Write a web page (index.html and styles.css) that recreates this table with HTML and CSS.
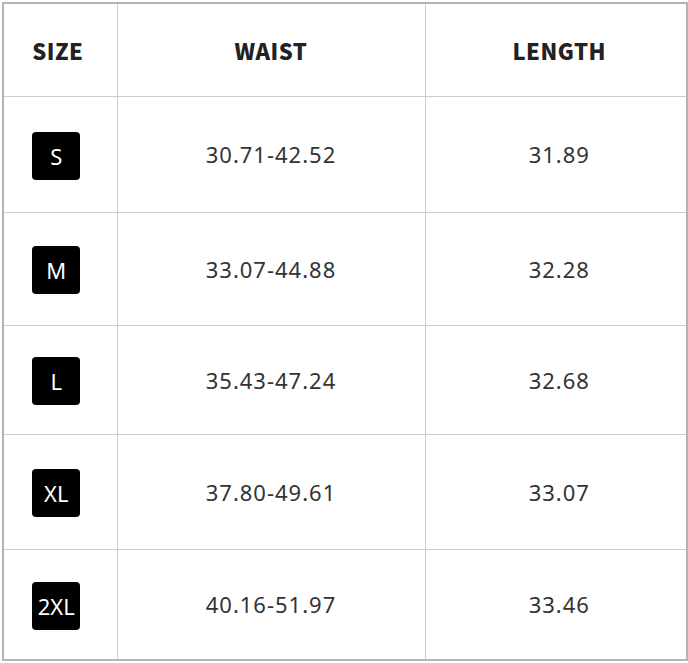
FILE: index.html
```html
<!DOCTYPE html>
<html>
<head>
<meta charset="utf-8">
<link rel="stylesheet" href="styles.css">
</head>
<body>
<div class="wrap">
<table class="chart">
  <colgroup>
    <col class="c1"><col class="c2"><col class="c3">
  </colgroup>
  <thead>
    <tr class="r0"><th class="k1">SIZE</th><th>WAIST</th><th class="k3">LENGTH</th></tr>
  </thead>
  <tbody>
    <tr class="r1"><td class="k1"><span class="badge">S</span></td><td>30.71-42.52</td><td class="k3">31.89</td></tr>
    <tr class="r2"><td class="k1"><span class="badge">M</span></td><td>33.07-44.88</td><td class="k3">32.28</td></tr>
    <tr class="r3"><td class="k1"><span class="badge">L</span></td><td>35.43-47.24</td><td class="k3">32.68</td></tr>
    <tr class="r4"><td class="k1"><span class="badge">XL</span></td><td>37.80-49.61</td><td class="k3">33.07</td></tr>
    <tr class="r5"><td class="k1"><span class="badge">2XL</span></td><td>40.16-51.97</td><td class="k3">33.46</td></tr>
  </tbody>
</table>
</div>
</body>
</html>
```
FILE: styles.css
```css
html, body {
  margin: 0;
  padding: 0;
  background: #fff;
}
.wrap {
  padding: 2px 2px 2px 2px;
}
.chart {
  border-collapse: collapse;
  width: 684px;
  table-layout: fixed;
  border: 2px solid #b4b4b4;
  font-family: "Noto Sans", "Noto Sans CJK SC", sans-serif;
}
.c1 { width: 114px; }
.c2 { width: 308px; }
.c3 { width: 262px; }
.chart th, .chart td {
  border: 1px solid #cdcdcd;
  text-align: center;
  vertical-align: middle;
  padding: 0;
}
.chart th {
  font-family: "Noto Sans CJK SC", "Noto Sans", sans-serif;
  font-size: 22px;
  font-weight: 900;
  color: #222;
  letter-spacing: 0.5px;
}
.chart td {
  font-size: 22px;
  letter-spacing: 1px;
  color: #333;
}
.chart .k1 { padding-right: 5px; }
.chart .k3 { padding-left: 7px; }
.r0 { height: 93px; }
.r1 { height: 116px; }
.r2 { height: 113px; }
.r3 { height: 109px; }
.r4 { height: 115px; }
.r5 { height: 111px; }
.badge {
  display: inline-flex;
  align-items: center;
  justify-content: center;
  width: 48px;
  height: 48px;
  background: #000;
  color: #fff;
  border-radius: 4px;
  font-size: 22px;
  letter-spacing: 0;
  margin-top: 3px;
  margin-right: 3px;
}
```
